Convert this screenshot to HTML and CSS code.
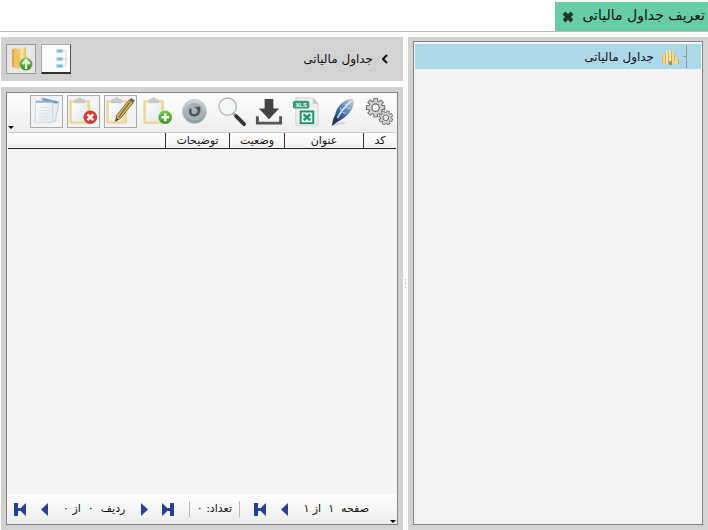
FILE: index.html
```html
<!DOCTYPE html>
<html lang="fa" dir="rtl">
<head>
<meta charset="utf-8">
<title>تعریف جداول مالیاتی</title>
<link rel="stylesheet" href="styles.css">
</head>
<body>
<svg class="defs" aria-hidden="true">
  <defs>
    <linearGradient id="gold" x1="0" x2="1"><stop offset="0" stop-color="#e9bd55"/><stop offset=".5" stop-color="#faeaa9"/><stop offset="1" stop-color="#e5bb57"/></linearGradient>
    <linearGradient id="paper" x1="0" y1="0" x2="1" y2="1"><stop offset="0" stop-color="#fff"/><stop offset="1" stop-color="#dfe5e9"/></linearGradient>
    <linearGradient id="green" x1="0" y1="0" x2="0" y2="1"><stop offset="0" stop-color="#7fcb48"/><stop offset="1" stop-color="#369527"/></linearGradient>
    <linearGradient id="steel" x1="0" y1="0" x2="0" y2="1"><stop offset="0" stop-color="#d3d8db"/><stop offset="1" stop-color="#8e969c"/></linearGradient>
    <linearGradient id="blue" x1="1" y1="0" x2="0" y2="1"><stop offset="0" stop-color="#d9dee4"/><stop offset=".35" stop-color="#7c9cc6"/><stop offset=".65" stop-color="#3c66a8"/><stop offset="1" stop-color="#22385f"/></linearGradient>
    <symbol id="clipboard" viewBox="0 0 32 32">
      <path d="M2 5h20v23H2z" fill="#f2dc9c" stroke="#e8cf8c"/>
      <path d="M4 7h16l-1 19H4z" fill="url(#paper)"/>
      <path d="M7 7V4l3-1q2-3 4 0l3 1v3z" fill="#c7cccf" stroke="#b4b9bc" stroke-width=".6"/>
    </symbol>
    <g id="teeth"><path d="M-1.500-9.500h3v19h-3z"/><path d="M-1.500-9.500h3v19h-3z" transform="rotate(45)"/><path d="M-1.500-9.500h3v19h-3z" transform="rotate(90)"/><path d="M-1.500-9.500h3v19h-3z" transform="rotate(135)"/></g>
    <g id="gear">
      <g fill="#666" stroke="#666" stroke-width="2"><use href="#teeth"/><circle r="7"/></g>
      <g fill="#d2d2d2"><use href="#teeth"/><circle r="7"/></g>
      <circle r="4" fill="#f6f6f6" stroke="#666" stroke-width="1.300"/>
    </g>
    <symbol id="first" viewBox="0 0 12 13"><path d="M0 0h4v13H0zM12 0v13L5 6.500z" fill="#2441a0"/><path d="M4 5h2v3H4z" fill="#2441a0"/></symbol>
    <symbol id="prev" viewBox="0 0 8 13"><path d="M7 0v13L0 6.500z" fill="#2441a0"/></symbol>
  </defs>
</svg>

<header class="tabs">
  <div class="tab">
    <span>تعریف جداول مالیاتی</span>
    <button class="plain" aria-label="بستن"><svg width="12" height="12" viewBox="0 0 12 12"><path d="M2 2l8 8M10 2l-8 8" stroke="#26352f" stroke-width="4"/></svg></button>
  </div>
</header>

<main class="workspace">
  <aside class="frame tree">
    <div class="box">
      <div class="node">
        <span class="branch"></span>
        <svg width="19" height="18" viewBox="0 0 19 18">
          <path d="M1 7l3-2 1 1v10l-4-1z" fill="#f0d796"/>
          <path d="M5 4l3-2 3 1v14l-6-1z" fill="#f8e7b4"/>
          <path d="M11 3l2 1v5l3 1 2 1v5h-7z" fill="#f0d796"/>
          <path d="M1.500 7v8M4.500 5v11M7.500 3v13M10.500 3v13M13.500 5v8M17.500 11v5" stroke="#d9b052"/>
          <path d="M8 13h3v4H8z" fill="#9c9660"/>
        </svg>
        <span>جداول مالیاتی</span>
      </div>
    </div>
  </aside>
  <div class="splitter"></div>
  <section class="content">
    <div class="crumbs">
      <svg width="6" height="10" viewBox="0 0 6 10"><path d="M5 1L1 5l4 4" fill="none" stroke="#111" stroke-width="2"/></svg>
      <h1>جداول مالیاتی</h1>
      <div class="views">
        <button class="view active" aria-label="نمایش درختی"><svg width="26" height="26" viewBox="0 0 26 26">
          <path d="M19 5h4v15h-4M19 13h4" fill="none" stroke="#d0d8dc"/>
          <path d="M13 3h7v4h-7zM13 11h7v4h-7zM13 18h7v4h-7z" fill="#b7dded"/>
          <path d="M15 4h4v2h-4zM15 12h4v2h-4zM15 19h4v2h-4z" fill="#7db6d5"/></svg></button>
        <button class="view" aria-label="پوشه بالاتر"><svg width="26" height="26" viewBox="0 0 26 26">
          <path d="M4 3l4-1 3 2v18l-7-1z" fill="#f0c75f"/><path d="M11 3l7-2v20l-8 2z" fill="url(#gold)"/><path d="M4 3l2 1v17l5 2-7-2z" fill="#dfa945"/>
          <circle cx="18" cy="18" r="6.500" fill="url(#green)"/><path d="M18 23v-8M14.500 18l3.500-4 3.500 4" fill="none" stroke="#fff" stroke-width="2.200"/></svg></button>
      </div>
    </div>

    <div class="frame list">
      <div class="box">
        <div class="toolbar">
          <button class="tool" aria-label="تنظیمات"><svg viewBox="0 0 32 32"><use href="#gear" transform="translate(12 12) scale(.95)"/><use href="#gear" transform="translate(22.500 22.500) rotate(20) scale(.72)"/></svg></button>
          <button class="tool" aria-label="ویرایش سریع"><svg viewBox="0 0 32 32">
            <path d="M5 30Q14 25 20 28Q13 30 5 31z" fill="#d3d6d9"/><path d="M8 22Q9 12 17 6 23 2 27 3 29 8 25 15 20 22 12 26z" fill="url(#blue)"/><path d="M10 24Q15 14 25 5" fill="none" stroke="#e3ebf4" stroke-width="1.500"/><path d="M8 20l5 5-5 4-3 2 1-6z" fill="#273b57"/><path d="M14 12l1 5M19 8l1 4M20 18l-4-1M24 13l-4-1" stroke="#c4d5e8"/></svg></button>
          <button class="tool" aria-label="خروجی اکسل"><svg viewBox="0 0 32 32">
            <path d="M6 2h18l5 6v22H6z" fill="#edf0ef" stroke="#ccd2d0"/><path d="M24 2v6h5z" fill="#b8c3bf"/><rect x="3" y="5" width="17" height="8" rx="2" fill="#379c76"/><text x="11.500" y="11" font-size="6" font-family="Liberation Sans, sans-serif" font-weight="700" text-anchor="middle" fill="#fff">XLS</text><path d="M11 16h13v12H11z" fill="#fff" stroke="#159668" stroke-width="2"/><path d="M14 19l7 6M21 19l-7 6" stroke="#159668" stroke-width="2.500"/></svg></button>
          <button class="tool" aria-label="دریافت"><svg viewBox="0 0 32 32"><path d="M12 3h9v10h6L16.500 24 6 13h6z" fill="#444"/><path d="M4.500 21v7h24v-7" fill="none" stroke="#555" stroke-width="3"/></svg></button>
          <button class="tool" aria-label="جستجو"><svg viewBox="0 0 32 32"><path d="M18 18l4 4" stroke="#999" stroke-width="3"/><path d="M21 21l8 8" stroke="#353535" stroke-width="4" stroke-linecap="round"/><circle cx="12" cy="11" r="9" fill="#f4f7f8" stroke="#b6babc" stroke-width="1.500"/><path d="M5 12q0-7 7-7" fill="none" stroke="#fff" stroke-width="2"/></svg></button>
          <button class="tool" aria-label="بازخوانی"><svg viewBox="0 0 32 32"><circle cx="16" cy="16" r="12.500" fill="url(#steel)" stroke="#c3c8cb"/><circle cx="16" cy="16" r="9" fill="#a9b0b5"/><path d="M12 13q-2 7 4 7 6-1 4-7" fill="none" stroke="#46525c" stroke-width="2.500"/><path d="M16 11h6v6z" fill="#46525c"/></svg></button>
          <button class="tool" aria-label="افزودن"><svg viewBox="0 0 32 32"><use href="#clipboard"/><circle cx="24" cy="22" r="7" fill="url(#green)"/><path d="M24 18v8M20 22h8" stroke="#fff" stroke-width="2.500"/></svg></button>
          <button class="tool framed" aria-label="ویرایش"><svg viewBox="0 0 32 32"><use href="#clipboard"/><path d="M25 4l4 3-13 16-5 3 1-6z" fill="#e5b94f" stroke="#6c5c31"/><path d="M26 6L14 22" stroke="#786b42" stroke-width="1.500"/><path d="M25 4l2-2 4 3-2 2z" fill="#6a6656"/><path d="M12 23l-1 3 3-2z" fill="#333"/></svg></button>
          <button class="tool framed" aria-label="حذف"><svg viewBox="0 0 32 32"><use href="#clipboard"/><circle cx="23" cy="22" r="7" fill="#da3931"/><path d="M20 19l6 6M26 19l-6 6" stroke="#fff" stroke-width="2.500"/></svg></button>
          <button class="tool framed" aria-label="رونوشت"><svg viewBox="0 0 32 32"><path d="M11 2l18 4-4 20-16-3z" fill="#e8eef3" stroke="#bdcad4"/><path d="M12 2l16 4-1 2-15-3z" fill="#6b98c1"/><path d="M5 5l17 1 1 21-19 1z" fill="url(#paper)" stroke="#ced6db"/><path d="M5 5h17v2H5z" fill="#8fb5d6"/><path d="M8 12h11M8 15h11M8 18h11M8 21h11M8 24h8" stroke="#dce2e6"/></svg></button>
          <span class="more"></span>
        </div>
        <table>
          <thead><tr><th class="code">کد</th><th class="name">عنوان</th><th class="state">وضعیت</th><th class="note">توضیحات</th><th></th></tr></thead>
          <tbody></tbody>
        </table>
        <nav class="pager">
          <span class="pages">صفحه &nbsp;۱ &nbsp;از ۱</span>
          <button class="plain" aria-label="صفحه قبل"><svg width="8" height="13"><use href="#prev"/></svg></button>
          <button class="plain" aria-label="صفحه اول"><svg width="12" height="13"><use href="#first"/></svg></button>
          <span class="count">تعداد: ۰</span>
          <button class="plain flip" aria-label="ردیف آخر"><svg width="12" height="13"><use href="#first"/></svg></button>
          <button class="plain flip" aria-label="ردیف بعد"><svg width="8" height="13"><use href="#prev"/></svg></button>
          <span class="rows">ردیف &nbsp;۰ &nbsp;از ۰</span>
          <button class="plain" aria-label="ردیف قبل"><svg width="8" height="13"><use href="#prev"/></svg></button>
          <button class="plain" aria-label="ردیف اول"><svg width="12" height="13"><use href="#first"/></svg></button>
          <span class="more"></span>
        </nav>
      </div>
    </div>
  </section>
</main>
</body>
</html>
```
FILE: styles.css
```css
* { box-sizing: border-box; }
body {
  margin: 0;
  min-height: 100vh;
  display: flex;
  flex-direction: column;
  background: #fff;
  color: #111;
  font: 11px/16px "DejaVu Sans", sans-serif;
}
svg { display: block; flex: none; }
.defs { position: absolute; width: 0; height: 0; }
button { font: inherit; cursor: pointer; }
.plain { padding: 0; border: 0; background: none; }

.tabs { display: flex; height: 32px; padding-top: 2px; border-bottom: 1px solid #b8bcba; }
.tab {
  display: flex;
  align-items: center;
  gap: 8px;
  padding: 0 3px 4px 7px;
  background: #66cda6;
  font-size: 14px;
  white-space: nowrap;
}
.tab .plain { padding-top: 4px; }

.workspace { flex: 1; display: grid; grid-template-columns: 300fr 5px 402fr; padding: 5px 0 0 1px; }
.frame { display: flex; padding: 5px; background: #d2d2d2; }
.box { flex: 1; min-width: 0; display: flex; flex-direction: column; border: 1px solid #858585; background: #f4f4f4; }
.tree { padding-top: 4px; }
.tree .box { padding: 2px 1px; }
.node { display: flex; align-items: center; gap: 7px; height: 25px; padding-right: 14px; background: #add8e6; font-size: 12px; white-space: nowrap; }
.node .branch { margin-left: -4px; }
.branch { width: 4px; height: 23px; border-right: 1px solid #829ba4; background: linear-gradient(#829ba4, #829ba4) center / 4px 1px no-repeat; }
.splitter { background: radial-gradient(circle, #bbb 1px, transparent 1px) center / 5px 4px repeat-y content-box; padding: 242px 0; }

.content { display: flex; flex-direction: column; gap: 6px; min-width: 0; }
.crumbs { display: flex; align-items: center; gap: 9px; height: 44px; padding: 0 15px 0 5px; background: #d2d2d2; }
h1 { margin: 0; font-size: 12px; font-weight: 400; }
.views { display: flex; gap: 5px; margin-right: auto; }
.view { width: 30px; height: 30px; padding: 1px; border: 1px solid #999; background: #e8e8e8; }
.view.active { border-color: #aaa #555 #333 #aaa; border-bottom-width: 2px; background: #fcfcfc; }
.list { flex: 1; }
.list .box { padding: 0 1px; }

.toolbar { position: relative; display: flex; gap: 4px; height: 40px; padding-top: 2px; border-bottom: 1px solid #ccc; background: linear-gradient(#fff, #eee); }
.tool { width: 33px; height: 33px; padding: 0; border: 1px solid transparent; background: none; }
.tool svg { width: 31px; height: 31px; }
.framed { border-color: #aaa; background: #f3f3f3; }
.more { position: absolute; bottom: 3px; left: 0; border: 3px solid transparent; border-top-color: #000; border-bottom: 0; }

table { width: 100%; table-layout: fixed; border-collapse: separate; border-spacing: 0; background: linear-gradient(#fdfdfd, #f0f0f0); }
th { height: 16px; padding: 0; border-bottom: 1px solid #222; border-left: 1px solid #333; font-weight: 400; line-height: 15px; }
th:last-child { border-left: 0; }
.code { width: 33px; }
.name { width: 79px; }
.state { width: 55px; }
.note { width: 64px; }

.pager { position: relative; display: flex; align-items: center; justify-content: space-between; height: 30px; margin: auto -1px 0; padding: 0 28px 0 7px; background: linear-gradient(#fff, #ededed); white-space: nowrap; }
.pager .more { right: 1px; left: auto; bottom: 1px; }
.count { padding: 0 7px; border: solid #bbb; border-width: 0 1px; }
.flip svg { transform: scaleX(-1); }
```
